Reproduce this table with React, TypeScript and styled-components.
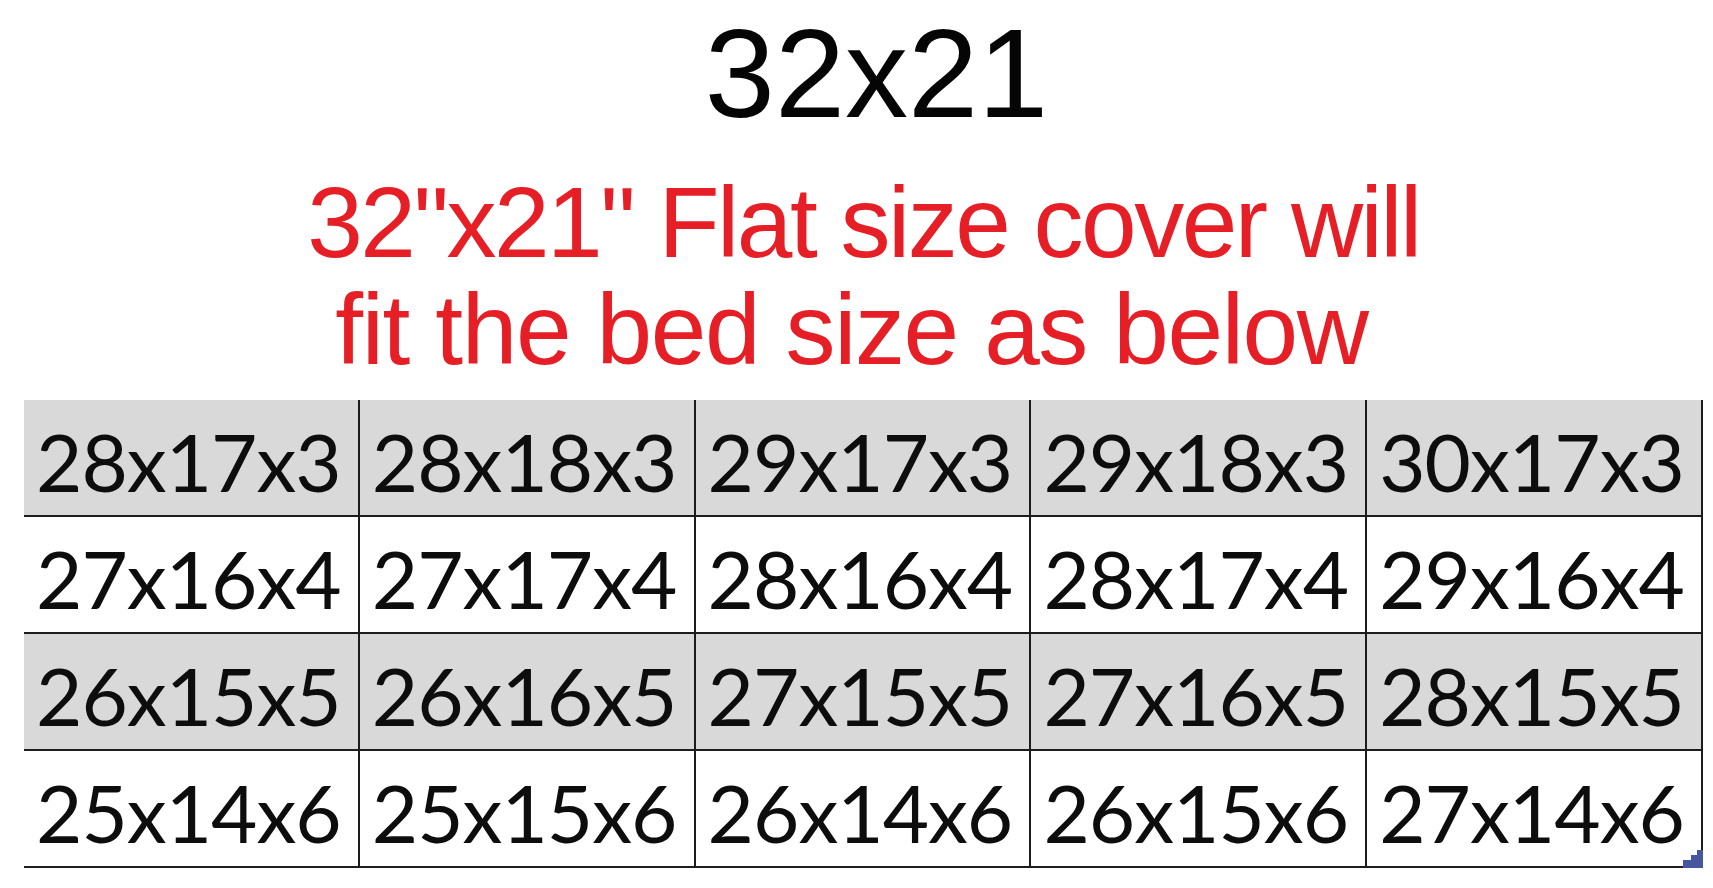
import styled, { createGlobalStyle } from "styled-components";

const sizes = [
  ["28x17x3", "28x18x3", "29x17x3", "29x18x3", "30x17x3"],
  ["27x16x4", "27x17x4", "28x16x4", "28x17x4", "29x16x4"],
  ["26x15x5", "26x16x5", "27x15x5", "27x16x5", "28x15x5"],
  ["25x14x6", "25x15x6", "26x14x6", "26x15x6", "27x14x6"],
];

const App = () => {
  return (
    <>
      <GlobalStyle />
      <Page>
        <Title>32x21</Title>
        <Note>
          <NoteLine $spacing={-2.5} $shift={0}>
            32"x21" Flat size cover will
          </NoteLine>
          <NoteLine $spacing={-1.4} $shift={24}>
            fit the bed size as below
          </NoteLine>
        </Note>
        <SizeTable>
          {sizes.map((row, r) =>
            row.map((size) => (
              <Cell key={size} $shaded={r % 2 === 0}>
                {size}
              </Cell>
            ))
          )}
          <FillHandle viewBox="0 0 20 18">
            <path d="M20 0 V18 H0 V10 H8 V5 H14 V0 Z" fill="#4657a0" />
          </FillHandle>
        </SizeTable>
      </Page>
    </>
  );
};

export default App;

const GlobalStyle = createGlobalStyle`
  html, body {
    margin: 0;
    padding: 0;
    background: #ffffff;
  }
  body {
    font-family: "Liberation Sans", Arial, sans-serif;
  }
`;

const Page = styled.div`
  width: 1713px;
  height: 888px;
  box-sizing: border-box;
  padding: 10px 10px 0 24px;
  display: flex;
  flex-direction: column;
  align-items: stretch;
  overflow: hidden;
`;

const Title = styled.div`
  font-family: "Liberation Sans", Arial, sans-serif;
  font-size: 126px;
  line-height: 127px;
  color: #050505;
  text-align: center;
  padding-left: 26px;
`;

const Note = styled.div`
  margin-top: 32px;
  display: flex;
  flex-direction: column;
  align-items: center;
  color: #e61f27;
  font-family: "Liberation Sans", Arial, sans-serif;
  font-size: 100px;
  line-height: 107px;
`;

const NoteLine = styled.div<{ $spacing: number; $shift: number }>`
  white-space: pre;
  letter-spacing: ${(p) => p.$spacing}px;
  margin-right: ${(p) => p.$shift}px;
`;

const SizeTable = styled.div`
  position: relative;
  margin-top: 17px;
  display: grid;
  grid-template-columns: repeat(5, 1fr);
  grid-auto-rows: 117px;
`;

const Cell = styled.div<{ $shaded: boolean }>`
  box-sizing: border-box;
  background: ${(p) => (p.$shaded ? "#d9d9d9" : "#ffffff")};
  border-right: 2px solid #1c1c1c;
  border-bottom: 2px solid #1c1c1c;
  padding: 21px 0 0 12px;
  font-family: Lato, "Open Sans", sans-serif;
  font-size: 80px;
  line-height: 80px;
  letter-spacing: -1px;
  color: #0d0d0d;
`;

const FillHandle = styled.svg`
  position: absolute;
  right: 0;
  bottom: 0;
  width: 20px;
  height: 18px;
`;
